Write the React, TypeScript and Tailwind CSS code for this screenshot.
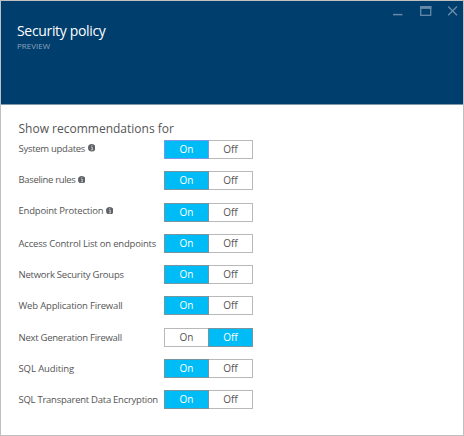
type Policy = { label: string; info?: boolean; on: boolean; focused?: boolean; tracking: string };

const policies: Policy[] = [
  { label: "System updates", info: true, on: true, focused: true, tracking: "tracking-[-0.28px]" },
  { label: "Baseline rules", info: true, on: true, tracking: "tracking-[-0.34px]" },
  { label: "Endpoint Protection", info: true, on: true, tracking: "tracking-[-0.19px]" },
  { label: "Access Control List on endpoints", on: true, tracking: "tracking-[-0.19px]" },
  { label: "Network Security Groups", on: true, tracking: "tracking-[-0.24px]" },
  { label: "Web Application Firewall", on: true, tracking: "tracking-[-0.18px]" },
  { label: "Next Generation Firewall", on: false, tracking: "tracking-[-0.26px]" },
  { label: "SQL Auditing", on: true, tracking: "tracking-[-0.1px]" },
  { label: "SQL Transparent Data Encryption", on: true, tracking: "tracking-[-0.26px]" },
];

function InfoIcon() {
  return (
    <svg className="-mt-px ml-[2.5px] size-[7.5px] shrink-0" viewBox="0 0 7 7">
      <circle cx="3.5" cy="3.5" r="3.5" fill="#5f6266" />
      <path d="M2.8 3h1.2v2.2M2.7 5.4h1.8M3.1 1.6h.9" stroke="#fff" strokeWidth=".6" fill="none" />
    </svg>
  );
}

function Toggle({ on, focused }: { on: boolean; focused?: boolean }) {
  const half = "flex h-[19px] items-center justify-center border pb-px text-[10px] leading-none";
  const active = "relative bg-[#00bcf6] font-medium text-white";
  const idle = "bg-white text-[#555]";
  return (
    <div className="flex w-[89px] shrink-0">
      <button className={`${half} w-[45px] ${on ? active : idle} ${focused ? "border-[#7f96e8]" : on ? "border-[#7795a0]" : "border-[#b9b9b9]"}`}>
        On
      </button>
      <button className={`${half} -ml-px w-[45px] ${on ? idle : active} ${on ? "border-[#b9b9b9]" : "border-[#7795a0]"}`}>
        Off
      </button>
    </div>
  );
}

export default function App() {
  return (
    <main className="flex h-[436px] w-[464px] flex-col border border-[#c0c0c0] bg-white font-['Open_Sans','Noto_Sans',sans-serif] text-[#555]">
      <header className="flex h-[104px] shrink-0 justify-between border-b border-[#8298af] bg-[#003e6e]">
        <div className="pl-[16px] pt-[20px]">
          <h1 className="whitespace-nowrap text-[14px] leading-[20px] tracking-[-0.33px] text-white">Security policy</h1>
          <p className="text-[8px] leading-[9px] text-[#8ba5bd]">PREVIEW</p>
        </div>
        <svg className="mr-[3px] mt-[3px] h-[14px] w-[70px]" viewBox="0 0 70 14" fill="none" stroke="#6689a8">
          <path d="M3 10.6h9.5" strokeWidth="1.5" />
          <rect x="30.7" y="2.7" width="10" height="8.6" strokeWidth="1.3" />
          <path d="M30 3.5h11.4" strokeWidth="2.8" />
          <path d="m58.2 2.5 8.8 8.8m0-8.8-8.8 8.8" strokeWidth="1.5" />
        </svg>
      </header>
      <section className="pl-[17.5px] pt-[15px]">
        <h2 className="h-[20px] whitespace-nowrap text-[12px] leading-[17px]">Show recommendations for</h2>
        <div className="flex flex-col gap-[12.25px]">
          {policies.map((p) => (
            <div key={p.label} className="flex h-[19px] items-start">
              <div className={`flex w-[145.5px] shrink-0 items-center whitespace-nowrap ${p.info ? "pt-[0.5px]" : "pt-[2px]"}`}>
                <span className={`text-[9.5px] leading-[16px] ${p.tracking}`}>{p.label}</span>
                {p.info && <InfoIcon />}
              </div>
              <Toggle on={p.on} focused={p.focused} />
            </div>
          ))}
        </div>
      </section>
    </main>
  );
}
